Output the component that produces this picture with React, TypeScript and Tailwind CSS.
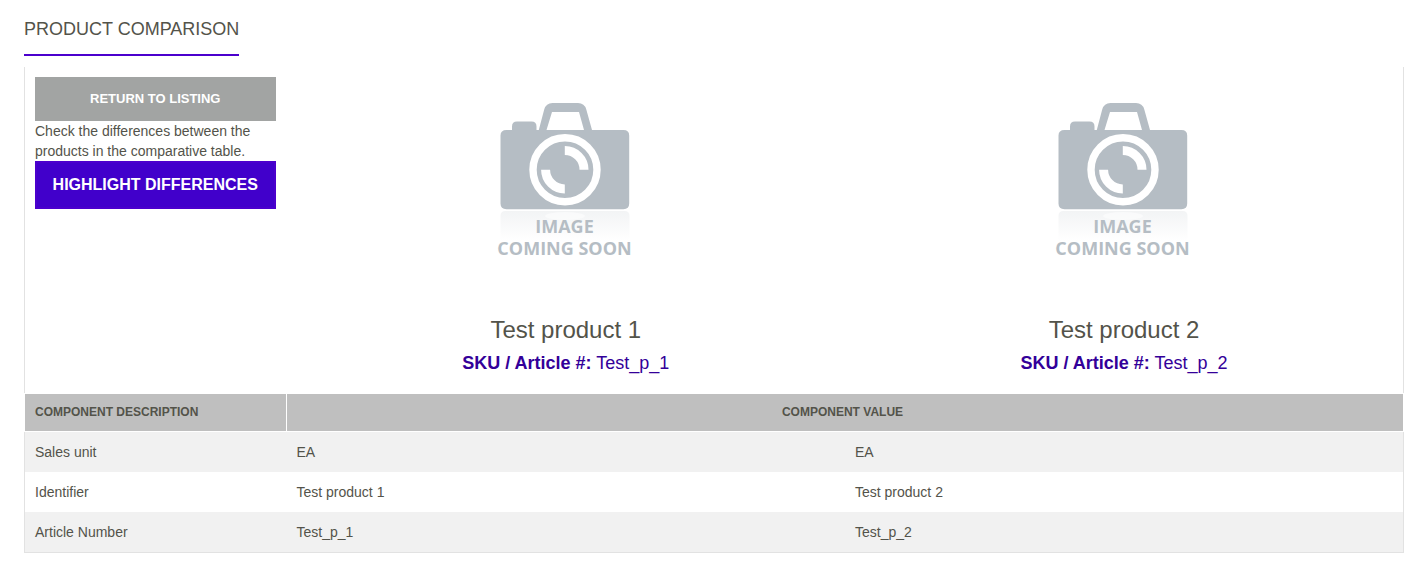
import React from "react";

type Product = { name: string; article: string; unit: string };

const products: Product[] = [
  { name: "Test product 1", article: "Test_p_1", unit: "EA" },
  { name: "Test product 2", article: "Test_p_2", unit: "EA" },
];

const rows: { label: string; value: (p: Product) => string }[] = [
  { label: "Sales unit", value: (p) => p.unit },
  { label: "Identifier", value: (p) => p.name },
  { label: "Article Number", value: (p) => p.article },
];

function ImagePlaceholder({ id }: { id: string }) {
  return (
    <svg viewBox="0 0 200 200" className="mx-auto block size-[200px]" role="img" aria-label="Image coming soon">
      <defs>
        <linearGradient id={id} x1="0" y1="0" x2="0" y2="1">
          <stop offset="0" stopColor="#b5bdc4" stopOpacity="0.17" />
          <stop offset="1" stopColor="#b5bdc4" stopOpacity="0" />
        </linearGradient>
      </defs>
      <path
        fill={`url(#${id})`}
        d="M34.500 139q0-5 5-5h119q5 0 5 5v25h-129z"
      />
      <ellipse cx="99" cy="139" rx="20" ry="4" fill="#fff" fillOpacity="0.5" />
      <path
        fill="#b5bdc4"
        fillRule="evenodd"
        d="M40.500 53h5.500v-3.500q0-5 5-5h14.500q5 0 5 5V53h2.300l5.400-20.500Q80 26 86.500 26H112q6.500 0 8.300 6.500L126 53h31.500q5.700 0 5.700 5.500v68q0 5.700-5.700 5.700h-117q-6 0-6-5.700v-68Q34.500 53 40.500 53zM86 35l-5.500 18H118l-5-18z"
      />
      <circle cx="99" cy="92.700" r="32" fill="none" stroke="#fff" strokeWidth="7.400" />
      <path
        d="M98.800 73.500a19.200 19.200 0 0 1 19.200 19.200M98.800 111.900a19.200 19.200 0 0 1-19.200-19.200"
        fill="none"
        stroke="#fff"
        strokeWidth="9"
      />
      <g
        textAnchor="middle"
        className="fill-[#b5bdc4] font-['Open_Sans',sans-serif] text-[18px] font-bold"
      >
        <text x="98.500" y="156">IMAGE</text>
        <text x="98.500" y="178">COMING SOON</text>
      </g>
    </svg>
  );
}

export default function App() {
  return (
    <main className="px-6 pt-4 pr-[13px] pb-5 font-['Liberation_Sans',Arial,sans-serif] text-sm leading-5 text-[#53534a]">
      <h1 className="mb-[11px] inline-block border-b-2 border-[#4b00cd] pb-3 text-lg leading-[26px] uppercase">
        Product comparison
      </h1>
      <table className="w-full table-fixed border-collapse border-x border-b border-[#e2e2e2]">
        <colgroup>
          <col className="w-[262px]" />
          <col />
          <col />
        </colgroup>
        <tbody>
          <tr>
            <td className="p-[10px] pr-[11px] align-top">
              <button
                type="button"
                className="block h-11 w-full bg-[#a2a4a3] text-[13px] font-bold text-white uppercase"
              >
                Return to listing
              </button>
              <p>Check the differences between the products in the comparative table.</p>
              <button
                type="button"
                className="block h-12 w-full border-2 border-[#4b00cd] bg-[#4100cb] text-base font-bold whitespace-nowrap text-white uppercase"
              >
                Highlight differences
              </button>
            </td>
            {products.map((p, i) => (
              <td key={p.article} className="p-[10px] text-center align-top">
                <ImagePlaceholder id={`reflection-${i}`} />
                <h2 className="mt-[37px] text-2xl leading-8">{p.name}</h2>
                <p className="mt-1 mb-[7px] text-lg leading-[26px] text-[#330099]">
                  <strong>SKU / Article #:</strong> <a href="#">{p.article}</a>
                </p>
              </td>
            ))}
          </tr>
          <tr className="bg-[#bfbfbf] text-xs leading-4 uppercase">
            <th scope="col" className="h-[38px] border border-white px-[10px] pb-[2px] text-left">
              Component description
            </th>
            <th scope="col" colSpan={2} className="h-[38px] border border-white pr-[15px] pb-[2px] pl-[10px] text-center">
              Component value
            </th>
          </tr>
          {rows.map((row) => (
            <tr key={row.label} className="odd:bg-[#f1f1f1]">
              <th scope="row" className="p-[10px] text-left font-normal">
                {row.label}
              </th>
              {products.map((p) => (
                <td key={p.article} className="p-[10px]">
                  {row.value(p)}
                </td>
              ))}
            </tr>
          ))}
        </tbody>
      </table>
    </main>
  );
}
